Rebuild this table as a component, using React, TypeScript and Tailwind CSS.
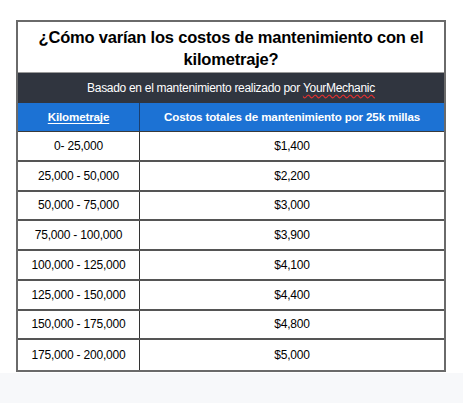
const ROWS = [
  ["0- 25,000", "$1,400"],
  ["25,000 - 50,000", "$2,200"],
  ["50,000 - 75,000", "$3,000"],
  ["75,000 - 100,000", "$3,900"],
  ["100,000 - 125,000", "$4,100"],
  ["125,000 - 150,000", "$4,400"],
  ["150,000 - 175,000", "$4,800"],
  ["175,000 - 200,000", "$5,000"],
]

export default function App() {
  return (
    <div className="w-[474px] h-[403px] bg-white overflow-hidden" style={{ fontFamily: '"Liberation Sans", Arial, sans-serif' }}>
      <div className="pt-[20px] pl-[16px]">
        <div className="w-[430px] border-2 border-[#6a6a6a]">
          {/* titulo */}
          <div className="h-[51px] pt-[2px] flex items-center justify-center text-center text-[16.5px] leading-[22px] tracking-[-0.2px] font-bold text-black border-b border-[#9a9a9a]">
            ¿Cómo varían los costos de mantenimiento con el<br />kilometraje?
          </div>
          <div className="h-[30px] bg-[#30353f] flex items-center justify-center text-white text-[12px] tracking-[-0.3px]">
            Basado en el mantenimiento realizado por&nbsp;
            <span className="underline decoration-wavy decoration-[#e03030] underline-offset-2">YourMechanic</span>
          </div>
          <div className="h-[29px] bg-[#1c72d4] grid grid-cols-[122px_1fr] text-white text-[11.6px] tracking-[-0.15px] font-bold border-b border-[#3a3a3a]">
            <div className="flex items-center justify-center border-r border-[#1a3f70]">
              <span className="underline underline-offset-2">Kilometraje</span>
            </div>
            <div className="flex items-center justify-center">Costos totales de mantenimiento por 25k millas</div>
          </div>
          {ROWS.map(([km, cost], i) => (
            <div
              key={i}
              className={`h-[29.75px] grid grid-cols-[122px_1fr] text-black text-[12px] tracking-[-0.2px] ${i < ROWS.length - 1 ? "border-b-2 border-[#555]" : ""}`}
            >
              <div className="flex items-center justify-center border-r border-[#333]">{km}</div>
              <div className="flex items-center justify-center">{cost}</div>
            </div>
          ))}
        </div>
      </div>
      <div className="mt-[1px] w-[463px] h-[32px] bg-[#f7f8fa]" />
    </div>
  )
}
